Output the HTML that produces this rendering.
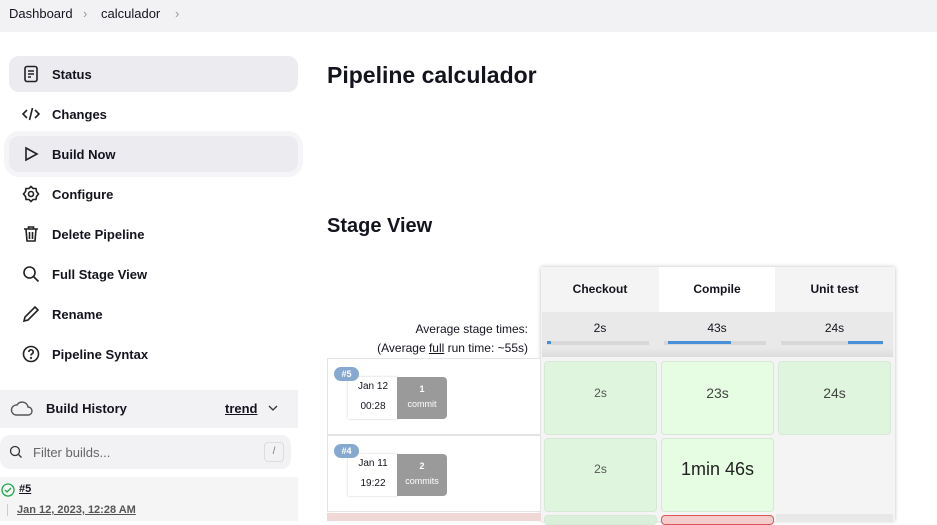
<!DOCTYPE html>
<html><head><style>
*{box-sizing:border-box;margin:0;padding:0}
body{width:937px;height:521px;overflow:hidden;background:#fff;font-family:"Liberation Sans","DejaVu Sans",sans-serif;color:#14141f;position:relative}
.bc{position:absolute;left:0;top:0;width:937px;height:32px;background:#f2f2f5;font-size:13px}
.bc span{position:absolute;top:6px}
.nav{position:absolute;left:9px;width:289px;height:36px;border-radius:10px;font-size:13px;font-weight:bold}
.nav svg{position:absolute;left:13px;top:9px}
.nav b{position:absolute;left:43px;top:11px}
.a{position:absolute}
.cell{position:absolute;border-radius:4px;border:1px solid #d6e8d6;text-align:center;color:#555}
</style></head><body>
<div class="bc"><span style="left:9px">Dashboard</span><span style="left:83px;color:#999">›</span><span style="left:101px">calculador</span><span style="left:175px;color:#999">›</span></div>

<div class="nav" style="top:56px;background:#ebebf0"><svg width="18" height="18" viewBox="0 0 18 18" fill="none" stroke="#222" stroke-width="1.6"><rect x="3" y="1.5" width="12" height="15" rx="2"/><path d="M6 6h6M6 9h6M6 12h3"/></svg><b>Status</b></div>
<div class="nav" style="top:96px"><svg width="18" height="18" viewBox="0 0 18 18" fill="none" stroke="#222" stroke-width="1.6"><path d="M5 5L1 9l4 4M13 5l4 4-4 4M10.5 3l-3 12"/></svg><b>Changes</b></div>
<div class="nav" style="top:136px;background:#ebebf0;box-shadow:0 0 0 5px #f5f5f8"><svg width="18" height="18" viewBox="0 0 18 18" fill="none" stroke="#222" stroke-width="1.6"><path d="M4 3l11 6-11 6z"/></svg><b>Build Now</b></div>
<div class="nav" style="top:176px"><svg width="18" height="18" viewBox="0 0 18 18" fill="none" stroke="#222" stroke-width="1.6"><circle cx="9" cy="9" r="2.5"/><path d="M9 1.5l2 2h3l.5 3 2 2.5-2 2.5-.5 3h-3l-2 2-2-2H4l-.5-3-2-2.5 2-2.5.5-3h3z"/></svg><b>Configure</b></div>
<div class="nav" style="top:216px"><svg width="18" height="18" viewBox="0 0 18 18" fill="none" stroke="#222" stroke-width="1.6"><path d="M2 4h14M6.5 4V2h5v2M4 4l1 12h8l1-12M7.5 7v7M10.5 7v7"/></svg><b>Delete Pipeline</b></div>
<div class="nav" style="top:256px"><svg width="18" height="18" viewBox="0 0 18 18" fill="none" stroke="#222" stroke-width="1.6"><circle cx="7.5" cy="7.5" r="5.5"/><path d="M11.5 11.5l5 5"/></svg><b>Full Stage View</b></div>
<div class="nav" style="top:296px"><svg width="18" height="18" viewBox="0 0 18 18" fill="none" stroke="#222" stroke-width="1.6"><path d="M2 16l1-4L13 2l3 3L6 15z"/></svg><b>Rename</b></div>
<div class="nav" style="top:336px"><svg width="18" height="18" viewBox="0 0 18 18" fill="none" stroke="#222" stroke-width="1.6"><circle cx="9" cy="9" r="7.5"/><path d="M6.8 7a2.2 2.2 0 1 1 3 2c-.6.3-.8.8-.8 1.5"/><circle cx="9" cy="13" r=".4"/></svg><b>Pipeline Syntax</b></div>

<div class="a" style="left:0;top:390px;width:298px;height:38px;background:#f2f2f5"></div>
<svg class="a" style="left:10px;top:399px" width="24" height="18" viewBox="0 0 24 18" fill="none" stroke="#555" stroke-width="1.4"><path d="M6 16h12a4 4 0 0 0 0-8 6 6 0 0 0-11-2A5 5 0 0 0 6 16z"/></svg>
<div class="a" style="left:46px;top:401px;font-size:13px;font-weight:bold">Build History</div>
<div class="a" style="left:225px;top:401px;font-size:13px;font-weight:bold;text-decoration:underline">trend</div>
<svg class="a" style="left:268px;top:404px" width="10" height="8" viewBox="0 0 10 8" fill="none" stroke="#333" stroke-width="1.3"><path d="M1 2l4 4 4-4"/></svg>
<div class="a" style="left:0;top:435px;width:291px;height:34px;border-radius:10px;background:#f2f2f5"></div>
<svg class="a" style="left:9px;top:445px" width="14" height="14" viewBox="0 0 14 14" fill="none" stroke="#333" stroke-width="1.3"><circle cx="6" cy="6" r="4.5"/><path d="M9.5 9.5l3 3"/></svg>
<div class="a" style="left:33px;top:445px;font-size:13px;color:#666">Filter builds...</div>
<div class="a" style="left:264px;top:442px;width:20px;height:20px;border:1px solid #ddd;border-radius:4px;font-size:10px;color:#777;text-align:center;line-height:18px">/</div>
<div class="a" style="left:0;top:477px;width:298px;height:44px;background:#f5f5f5"></div>
<svg class="a" style="left:1px;top:483px" width="14" height="14" viewBox="0 0 14 14" fill="none" stroke="#1ea64b" stroke-width="1.3"><circle cx="7" cy="7" r="6"/><path d="M4 7l2 2 4-4"/></svg>
<div class="a" style="left:19px;top:483px;font-size:11px;font-weight:bold;text-decoration:underline">#5</div>
<div class="a" style="left:7px;top:504px;width:1px;height:12px;background:#ccc"></div>
<div class="a" style="left:17px;top:504px;font-size:11px;font-weight:bold;color:#555;text-decoration:underline">Jan 12, 2023, 12:28 AM</div>

<div class="a" style="left:327px;top:62px;font-size:23px;font-weight:bold">Pipeline calculador</div>
<div class="a" style="left:327px;top:215px;font-size:20px;font-weight:bold">Stage View</div>

<div class="a" style="left:541px;top:267px;width:354px;height:254px;box-shadow:0 0 4px rgba(0,0,0,.25);background:#f4f4f4"></div>
<div class="a" style="left:542px;top:267px;width:116px;height:45px;background:#f4f4f4;font-size:12px;font-weight:bold;text-align:center;line-height:45px">Checkout</div>
<div class="a" style="left:659px;top:267px;width:116px;height:45px;background:#fff;font-size:12px;font-weight:bold;text-align:center;line-height:45px">Compile</div>
<div class="a" style="left:776px;top:267px;width:117px;height:45px;background:#f4f4f4;font-size:12px;font-weight:bold;text-align:center;line-height:45px">Unit test</div>
<div class="a" style="left:542px;top:312px;width:351px;height:45px;background:linear-gradient(#e9e9e9 80%,#dcdcdc)"></div>
<div class="a" style="left:542px;top:321px;width:116px;text-align:center;font-size:12px">2s</div>
<div class="a" style="left:659px;top:321px;width:116px;text-align:center;font-size:12px">43s</div>
<div class="a" style="left:776px;top:321px;width:117px;text-align:center;font-size:12px">24s</div>
<div class="a" style="left:547px;top:341px;width:102px;height:4px;background:#d8d8d8"><div style="width:4px;height:3px;background:#4a90d9"></div></div>
<div class="a" style="left:664px;top:341px;width:102px;height:4px;background:#d8d8d8"><div style="margin-left:4px;width:63px;height:3px;background:#4a90d9"></div></div>
<div class="a" style="left:781px;top:341px;width:102px;height:4px;background:#d8d8d8"><div style="margin-left:67px;width:35px;height:3px;background:#4a90d9"></div></div>
<div class="a" style="left:330px;top:320px;width:198px;text-align:right;font-size:12px;line-height:19px">Average stage times:<br>(Average <u>full</u> run time: ~55s)</div>

<div class="a" style="left:327px;top:358px;width:214px;height:77px;border:1px solid #e4e4e4;background:#fff"></div>
<div class="a" style="left:327px;top:435px;width:214px;height:77px;border:1px solid #e4e4e4;background:#fff"></div>
<div class="a" style="left:327px;top:513px;width:214px;height:8px;background:#f0d8d6"></div>

<div class="a" style="left:348px;top:377px;width:50px;height:42px;background:#fff;box-shadow:0 0 2px #ccc;font-size:10px;text-align:center;line-height:20px">Jan 12<br>00:28</div>
<div class="a" style="left:397px;top:377px;width:50px;height:42px;background:#9a9a9a;border-radius:0 4px 4px 0;color:#fff;font-size:9px;text-align:center;line-height:15px;padding-top:5px"><b>1</b><br>commit</div>
<div class="a" style="left:334px;top:367px;width:25px;height:14px;border-radius:7px;background:#87a8d0;color:#fff;font-size:9px;text-align:center;line-height:14px;font-weight:bold">#5</div>
<div class="a" style="left:348px;top:454px;width:50px;height:42px;background:#fff;box-shadow:0 0 2px #ccc;font-size:10px;text-align:center;line-height:20px">Jan 11<br>19:22</div>
<div class="a" style="left:397px;top:454px;width:50px;height:42px;background:#9a9a9a;border-radius:0 4px 4px 0;color:#fff;font-size:9px;text-align:center;line-height:15px;padding-top:5px"><b>2</b><br>commits</div>
<div class="a" style="left:334px;top:444px;width:25px;height:14px;border-radius:7px;background:#87a8d0;color:#fff;font-size:9px;text-align:center;line-height:14px;font-weight:bold">#4</div>

<div class="cell" style="left:544px;top:361px;width:113px;height:74px;background:#dff5dd;font-size:12px;line-height:62px">2s</div>
<div class="cell" style="left:661px;top:361px;width:113px;height:74px;background:#e6fde3;font-size:14px;line-height:62px;color:#444">23s</div>
<div class="cell" style="left:778px;top:361px;width:113px;height:74px;background:#dff5dd;font-size:14px;line-height:62px;color:#444">24s</div>
<div class="cell" style="left:544px;top:438px;width:113px;height:74px;background:#dff5dd;font-size:12px;line-height:60px">2s</div>
<div class="cell" style="left:661px;top:438px;width:113px;height:74px;background:#e6fde3;font-size:18px;line-height:60px;color:#222">1min 46s</div>
<div class="a" style="left:776px;top:436px;width:117px;height:77px;background:#f4f4f4"></div>
<div class="cell" style="left:544px;top:515px;width:113px;height:10px;background:#dbf0d8"></div>
<div class="cell" style="left:661px;top:515px;width:113px;height:10px;background:#f4cccc;border-color:#d55"></div>
<div class="a" style="left:776px;top:514px;width:117px;height:8px;background:#e8e8e8"></div>
</body></html>
